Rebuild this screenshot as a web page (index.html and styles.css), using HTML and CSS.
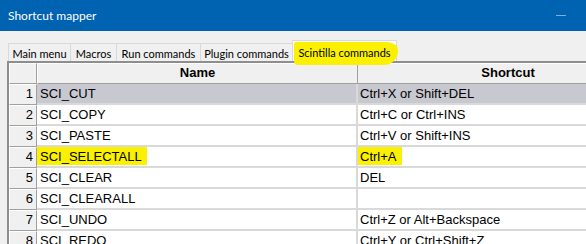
FILE: index.html
```html
<!DOCTYPE html>
<html lang="en">
<head>
  <meta charset="UTF-8">
  <title>Shortcut mapper</title>
  <link rel="stylesheet" href="styles.css">
</head>
<body>
  <div class="window">
    <div class="titlebar">
      <span class="title">Shortcut mapper</span>
      <span class="minimize"></span>
    </div>

    <div class="tabs">
      <div class="tab tab-main">Main menu</div>
      <div class="tab tab-macros">Macros</div>
      <div class="tab tab-run">Run commands</div>
      <div class="tab tab-plugin">Plugin commands</div>
      <div class="tab tab-scintilla active">
        <span class="marker"></span>
        <span class="tab-label">Scintilla commands</span>
      </div>
    </div>

    <div class="grid">
      <div class="row header">
        <div class="cell num"></div>
        <div class="cell name head">Name</div>
        <div class="cell key head">Shortcut</div>
      </div>
      <div class="row selected">
        <div class="cell num">1</div>
        <div class="cell name">SCI_CUT</div>
        <div class="cell key">Ctrl+X or Shift+DEL</div>
      </div>
      <div class="row">
        <div class="cell num">2</div>
        <div class="cell name">SCI_COPY</div>
        <div class="cell key">Ctrl+C or Ctrl+INS</div>
      </div>
      <div class="row">
        <div class="cell num">3</div>
        <div class="cell name">SCI_PASTE</div>
        <div class="cell key">Ctrl+V or Shift+INS</div>
      </div>
      <div class="row">
        <div class="cell num">4</div>
        <div class="cell name"><span class="hl hl-name">SCI_SELECTALL</span></div>
        <div class="cell key"><span class="hl hl-key">Ctrl+A</span></div>
      </div>
      <div class="row">
        <div class="cell num">5</div>
        <div class="cell name">SCI_CLEAR</div>
        <div class="cell key">DEL</div>
      </div>
      <div class="row">
        <div class="cell num">6</div>
        <div class="cell name">SCI_CLEARALL</div>
        <div class="cell key"></div>
      </div>
      <div class="row">
        <div class="cell num">7</div>
        <div class="cell name">SCI_UNDO</div>
        <div class="cell key">Ctrl+Z or Alt+Backspace</div>
      </div>
      <div class="row">
        <div class="cell num">8</div>
        <div class="cell name">SCI_REDO</div>
        <div class="cell key">Ctrl+Y or Ctrl+Shift+Z</div>
      </div>
    </div>
  </div>
</body>
</html>
```

FILE: styles.css
```css
body {
  margin: 0;
  background-color: #f0f0f0;
  overflow: hidden;
}

.window {
  width: 586px;
  height: 244px;
  overflow: hidden;
  background-color: #f0f0f0;
}

.titlebar {
  height: 31px;
  background-color: #0063b1;
  color: white;
  display: flex;
  align-items: center;
  padding-left: 8px;
  position: relative;
  font-family: 'Lato', sans-serif;
  font-size: 12px;
}

.title {
  margin-top: -1px;
}

.minimize {
  position: absolute;
  left: 556px;
  top: 15px;
  width: 10px;
  height: 1px;
  background-color: #7fb0d9;
}

.tabs {
  display: flex;
  align-items: flex-end;
  height: 21px;
  margin-top: 9px;
  padding-left: 8px;
  font-family: 'Lato', sans-serif;
  font-size: 11px;
  color: #000;
  position: relative;
  z-index: 1;
}

.tab {
  box-sizing: border-box;
  flex-shrink: 0;
  white-space: nowrap;
  height: 18px;
  border: 1px solid #d9d9d9;
  border-bottom: none;
  margin-left: -1px;
  display: flex;
  align-items: center;
  justify-content: center;
  background-color: #f0f0f0;
  padding-top: 1px;
}

.tab:first-child {
  margin-left: 0;
}

.tab-main { width: 63px; }
.tab-macros { width: 47px; }
.tab-run { width: 85px; }
.tab-plugin { width: 93px; }

.tab-scintilla {
  width: 105px;
  height: 21px;
  background-color: #ffffff;
  position: relative;
  padding-top: 2px;
}

.tab-label {
  position: relative;
}

.marker {
  position: absolute;
  left: 1px;
  top: 1px;
  width: 104px;
  height: 23px;
  background-color: #fbf000;
  border-radius: 2px 12px 14px 4px / 2px 8px 14px 4px;
}

.grid {
  border-top: 2px solid #8e8e8e;
  border-left: 2px solid #8e8e8e;
  margin-left: 7px;
  font-family: 'Liberation Sans', Arial, sans-serif;
  font-size: 13px;
  color: #000;
  width: 700px;
}

.row {
  display: flex;
  height: 21px;
}

.cell {
  box-sizing: border-box;
  height: 21px;
  line-height: 19px;
  white-space: nowrap;
  background-color: #ffffff;
  border-bottom: 2px solid #d9d9d9;
}

.num {
  width: 28px;
  background-color: #f0f0f0;
  text-align: right;
  padding-right: 3px;
  border-top: 1px solid #ffffff;
  border-left: 1px solid #ffffff;
  border-right: 1px solid #a0a0a0;
  border-bottom: 1px solid #a0a0a0;
  line-height: 18px;
}

.name {
  width: 321px;
  padding-left: 3px;
  border-right: 2px solid #d9d9d9;
}

.key {
  width: 300px;
  padding-left: 2px;
}

.header .cell {
  background-color: #f0f0f0;
  border-top: 1px solid #ffffff;
  border-bottom: 1px solid #a0a0a0;
  line-height: 18px;
}

.header .name {
  border-right: 1px solid #a0a0a0;
  border-left: 1px solid #ffffff;
}

.head {
  font-weight: bold;
  text-align: center;
  padding-left: 0;
}

.selected .name,
.selected .key {
  background-color: #c8c8d0;
}

.hl {
  display: inline-block;
  height: 18px;
  background-color: #fbf000;
}

.hl-name {
  margin-left: -3px;
  padding-left: 3px;
  padding-right: 5px;
}

.hl-key {
  margin-left: -2px;
  padding-left: 2px;
  padding-right: 6px;
}
```
